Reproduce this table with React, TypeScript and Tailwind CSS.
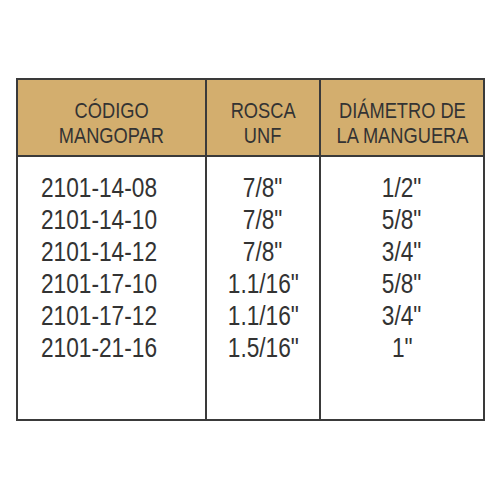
import React from 'react';

const rows = [
  { code: '2101-14-08', rosca: '7/8"', dia: '1/2"' },
  { code: '2101-14-10', rosca: '7/8"', dia: '5/8"' },
  { code: '2101-14-12', rosca: '7/8"', dia: '3/4"' },
  { code: '2101-17-10', rosca: '1.1/16"', dia: '5/8"' },
  { code: '2101-17-12', rosca: '1.1/16"', dia: '3/4"' },
  { code: '2101-21-16', rosca: '1.5/16"', dia: '1"' },
];

const font = { fontFamily: '"Liberation Sans", Arial, sans-serif' };

// the source uses a condensed face, so squeeze Liberation Sans horizontally
const Head = ({ lines }: { lines: string[] }) => (
  <>
    {lines.map((l) => (
      <div key={l}>
        <span className="inline-block whitespace-nowrap scale-x-[0.83]">{l}</span>
      </div>
    ))}
  </>
);

export default function App() {
  return (
    <div className="w-[501px] h-[501px] bg-white pt-[78px] pl-[16px]" style={font}>
      <div className="w-[469px] border-2 border-[#3a3a3a] grid grid-cols-[187px_114px_1fr] text-[#333333]">
        {/* header */}
        <div className="h-[77px] bg-[#d3ae6e] border-b-2 border-[#3a3a3a] pt-[18px] text-center text-[22px] leading-[25px]">
          <Head lines={['CÓDIGO', 'MANGOPAR']} />
        </div>
        <div className="h-[77px] bg-[#d3ae6e] border-b-2 border-l-2 border-[#3a3a3a] pt-[18px] text-center text-[22px] leading-[25px]">
          <Head lines={['ROSCA', 'UNF']} />
        </div>
        <div className="h-[77px] bg-[#d3ae6e] border-b-2 border-l-2 border-[#3a3a3a] pt-[18px] text-center text-[22px] leading-[25px]">
          <Head lines={['DIÁMETRO DE', 'LA MANGUERA']} />
        </div>

        {/* body */}
        <div className="h-[262px] pt-[15px] pl-[23px] text-[27px] leading-[32px]">
          {rows.map((r) => (
            <div key={r.code}>
              <span className="inline-block whitespace-nowrap origin-left scale-x-[0.84]">{r.code}</span>
            </div>
          ))}
        </div>
        <div className="h-[262px] border-l-2 border-[#3a3a3a] pt-[15px] text-center text-[27px] leading-[32px]">
          {rows.map((r) => (
            <div key={r.code}>
              <span className="inline-block whitespace-nowrap scale-x-[0.84]">{r.rosca}</span>
            </div>
          ))}
        </div>
        <div className="h-[262px] border-l-2 border-[#3a3a3a] pt-[15px] text-center text-[27px] leading-[32px]">
          {rows.map((r) => (
            <div key={r.code}>
              <span className="inline-block whitespace-nowrap scale-x-[0.84]">{r.dia}</span>
            </div>
          ))}
        </div>
      </div>
    </div>
  );
}
